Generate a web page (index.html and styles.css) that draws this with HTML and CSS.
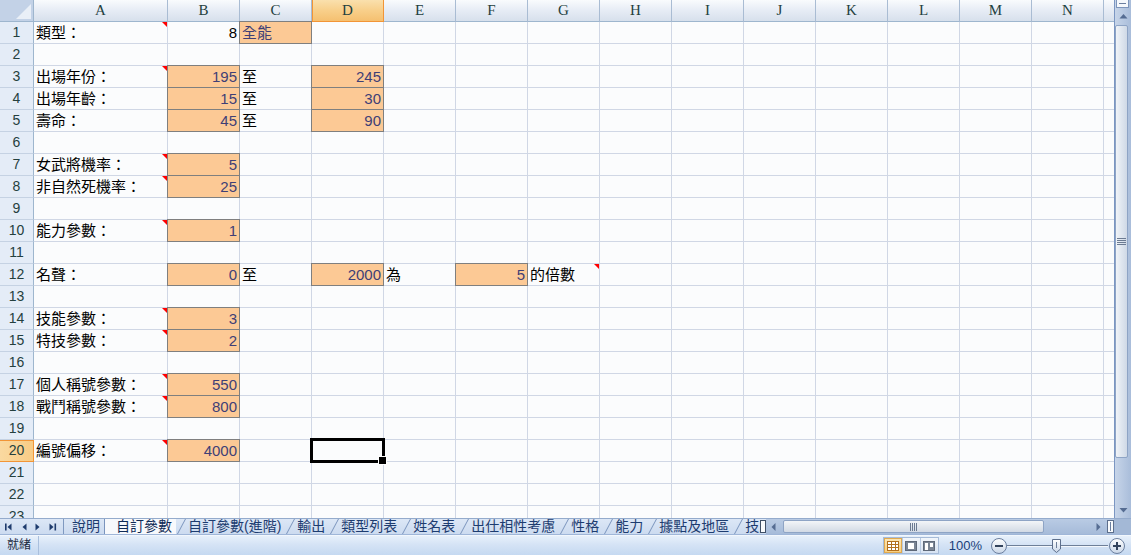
FILE: index.html
```html
<!DOCTYPE html>
<html lang="zh-Hant">
<head>
<meta charset="utf-8">
<title>自訂參數</title>
<link rel="stylesheet" href="styles.css">
</head>
<body>
<div class="app">
  <div class="workspace">
    <div class="sheet" id="sheet"></div>
    <div class="vscroll">
      <div class="vsplit"><span></span></div>
      <div class="vbtn">
        <svg width="13" height="17" viewBox="0 0 13 17"><path d="M2.5 10.5 L6.5 6 L10.5 10.5 Z" fill="#556c92"/></svg>
      </div>
      <div class="vthumb">
        <svg width="9" height="9" viewBox="0 0 9 9"><path d="M0 1.5 H9 M0 3.5 H9 M0 5.5 H9 M0 7.5 H9" stroke="#6c7b92" stroke-width="1"/></svg>
      </div>
      <div class="vtrack"></div>
      <div class="vbtn">
        <svg width="13" height="17" viewBox="0 0 13 17"><path d="M2.5 7 L6.5 11.5 L10.5 7 Z" fill="#556c92"/></svg>
      </div>
    </div>
  </div>

  <div class="bottombar">
    <div class="tabnav">
      <svg width="62" height="16" viewBox="0 0 62 16">
        <g fill="#1e3b6d">
          <rect x="5" y="4.5" width="1.6" height="7"/>
          <path d="M11.5 4.5 L7.5 8 L11.5 11.5 Z"/>
          <path d="M26.5 4.5 L22.5 8 L26.5 11.5 Z"/>
          <path d="M35.5 4.5 L39.5 8 L35.5 11.5 Z"/>
          <path d="M49.5 4.5 L53.5 8 L49.5 11.5 Z"/>
          <rect x="54.5" y="4.5" width="1.6" height="7"/>
        </g>
      </svg>
    </div>
    <div class="tabs">
      <div class="tab first">說明</div>
      <div class="tab current">自訂參數</div>
      <div class="tab">自訂參數(進階)</div>
      <div class="tab">輸出</div>
      <div class="tab">類型列表</div>
      <div class="tab">姓名表</div>
      <div class="tab">出仕相性考慮</div>
      <div class="tab">性格</div>
      <div class="tab">能力</div>
      <div class="tab">據點及地區</div>
      <div class="tab">技能</div>
    </div>
    <div class="tabsplit"></div>
    <div class="hscroll">
      <div class="hbtn">
        <svg width="16" height="16" viewBox="0 0 16 16"><path d="M9.5 4 L5.5 8 L9.5 12 Z" fill="#556c92"/></svg>
      </div>
      <div class="hthumb">
        <svg width="9" height="8" viewBox="0 0 9 8"><path d="M1.5 0 V8 M3.5 0 V8 M5.5 0 V8 M7.5 0 V8" stroke="#6c7b92" stroke-width="1"/></svg>
      </div>
      <div class="htrack"></div>
      <div class="hbtn">
        <svg width="16" height="16" viewBox="0 0 16 16"><path d="M6.5 4 L10.5 8 L6.5 12 Z" fill="#556c92"/></svg>
      </div>
      <div class="hsplit"><span></span></div>
    </div>
    <div class="corner"></div>
  </div>

  <div class="status">
    <div class="status-label">就緒</div>
    <div class="status-right">
      <div class="views">
        <div class="view on">
          <svg width="12" height="10" viewBox="0 0 12 10"><rect x="0.5" y="0.5" width="11" height="9" fill="#fff" stroke="#b26f1d"/><path d="M0.5 3.5 H11.5 M0.5 6.5 H11.5 M4.5 0.5 V9.5 M8.5 0.5 V9.5" stroke="#b26f1d"/></svg>
        </div>
        <div class="view">
          <svg width="12" height="10" viewBox="0 0 12 10"><rect x="0.5" y="0.5" width="11" height="9" fill="#7a8595" stroke="#5e6878"/><rect x="3" y="2" width="6" height="6" fill="#fff"/></svg>
        </div>
        <div class="view">
          <svg width="12" height="10" viewBox="0 0 12 10"><rect x="0.5" y="0.5" width="11" height="9" fill="#7a8595" stroke="#5e6878"/><rect x="2" y="2" width="3" height="7" fill="#fff"/><rect x="7" y="2" width="3" height="4" fill="#fff"/></svg>
        </div>
      </div>
      <div class="zoom-level">100%</div>
      <svg class="zoom" width="134" height="18" viewBox="0 0 134 18">
        <defs>
          <linearGradient id="knob" x1="0" y1="0" x2="0" y2="1">
            <stop offset="0" stop-color="#ffffff"/>
            <stop offset="1" stop-color="#c9d6e8"/>
          </linearGradient>
        </defs>
        <circle cx="8" cy="9" r="7.5" fill="url(#knob)" stroke="#6b7f9f"/>
        <rect x="4" y="8" width="8" height="2" fill="#33435c"/>
        <path d="M16 8.5 H117" stroke="#6e7f99" stroke-width="1"/>
        <path d="M16 9.5 H117" stroke="#f3f7fc" stroke-width="1"/>
        <path d="M61.5 2.5 H69.5 V12 L65.5 15.5 L61.5 12 Z" fill="url(#knob)" stroke="#5d6f8c"/>
        <path d="M65.5 5 V11" stroke="#6e7f99"/>
        <circle cx="126" cy="9" r="7.5" fill="url(#knob)" stroke="#6b7f9f"/>
        <rect x="122" y="8" width="8" height="2" fill="#33435c"/>
        <rect x="125" y="5" width="2" height="8" fill="#33435c"/>
      </svg>
    </div>
  </div>
</div>
<script src="script.js"></script>
</body>
</html>
```

FILE: styles.css
```css
* {
  box-sizing: border-box;
}

html,
body {
  margin: 0;
  height: 100%;
}

body {
  font-family: "Liberation Sans", "Noto Sans CJK TC", sans-serif;
  background: #fbfcfd;
  overflow: hidden;
}

.app {
  width: 1131px;
  height: 555px;
  display: flex;
  flex-direction: column;
}

/* ---------- worksheet ---------- */

.workspace {
  display: flex;
  height: 518px;
}

.sheet {
  flex: 1;
  min-width: 0;
  overflow: hidden;
  display: grid;
  grid-template-columns: 34px 134px repeat(14, 72px);
  grid-auto-rows: 22px;
  align-content: start;
  background: #fbfcfd;
}

.corner-all {
  position: relative;
  background: #c3d2e7;
  border-right: 1px solid #9eb6ce;
  border-bottom: 1px solid #9eb6ce;
}

.corner-all::after {
  content: "";
  position: absolute;
  right: 2px;
  bottom: 2px;
  width: 15px;
  height: 15px;
  background: #e9eff7;
  clip-path: polygon(100% 0, 100% 100%, 0 100%);
}

.colhead {
  border-right: 1px solid #a9bcd3;
  border-bottom: 1px solid #9eb6ce;
  background: linear-gradient(#f9fbfd, #e6ecf5 50%, #d7e0ec);
  font: 15px/21px "Liberation Serif", serif;
  text-align: center;
  color: #24403e;
}

.colhead.is-active {
  background: linear-gradient(#fae0ad, #f8cf8a 50%, #f5c070);
  border-right-color: #f29536;
  border-bottom-color: #f29536;
  box-shadow: inset 1px 0 #f29536;
}

.rowhead {
  border-right: 1px solid #9eb6ce;
  border-bottom: 1px solid #c5d2e3;
  background: #e4ecf7;
  font-size: 14px;
  line-height: 21px;
  text-align: center;
  color: #24403e;
}

.rowhead.is-active {
  background: linear-gradient(90deg, #fad9a0, #f8cc86);
  border-right-color: #f29536;
  border-bottom-color: #f29536;
  box-shadow: inset 0 1px #f29536;
}

.cell {
  position: relative;
  border-right: 1px solid #d0d7e5;
  border-bottom: 1px solid #d0d7e5;
  padding: 0 2px;
  font-size: 15px;
  line-height: 22px;
  white-space: nowrap;
  color: #000;
}

.cell.num {
  text-align: right;
}

/* Excel "Input" cell style */
.cell.input {
  background: #fcc995;
  color: #3f3f76;
}

.cell.input::before {
  content: "";
  position: absolute;
  inset: -1px;
  border: 1px solid #7f7f7f;
  pointer-events: none;
}

/* comment indicator */
.cell.note::after {
  content: "";
  position: absolute;
  top: 0;
  right: 0;
  border-top: 5px solid #ff0000;
  border-left: 5px solid transparent;
}

/* active cell frame and fill handle */
.cell.active::before {
  content: "";
  position: absolute;
  inset: -2px;
  border: 3px solid #000;
  z-index: 2;
}

.cell.active::after {
  content: "";
  position: absolute;
  right: -4px;
  bottom: -4px;
  width: 7px;
  height: 7px;
  background: #000;
  border: 1px solid #fff;
  z-index: 3;
}

/* ---------- vertical scrollbar ---------- */

.vscroll {
  width: 17px;
  display: flex;
  flex-direction: column;
  border-left: 1px solid #7b96c2;
  background: linear-gradient(90deg, #c7d5e9, #a9bdda);
}

.vsplit {
  height: 8px;
  margin: 0 2px 0 1px;
  background: #f5f8fc;
  border: 1px solid #7d95bb;
  border-top: 0;
  display: flex;
  align-items: center;
  justify-content: center;
}

.vsplit span {
  width: 7px;
  height: 1px;
  background: #6b7f9f;
}

.vbtn {
  height: 17px;
  display: flex;
  justify-content: center;
}

.vthumb {
  height: 433px;
  margin: 0 3px 0 0;
  border: 1px solid #8ea4c5;
  border-radius: 2px;
  background: linear-gradient(90deg, #f1f4f8, #dfe6ef 50%, #cfd9e6);
  display: flex;
  align-items: center;
  justify-content: center;
}

.vtrack {
  flex: 1;
}

/* ---------- sheet tabs + horizontal scrollbar ---------- */

.bottombar {
  height: 17px;
  display: flex;
  border-top: 1px solid #94abcc;
  background: linear-gradient(#dce7f6, #ccdbf0);
  border-bottom: 1px solid #9fb6d8;
}

.tabnav {
  width: 64px;
  flex: none;
  border-right: 1px solid #7f99c0;
}

.tabnav svg {
  display: block;
}

.tabs {
  width: 696px;
  flex: none;
  display: flex;
  overflow: hidden;
}

.tab {
  position: relative;
  flex: none;
  padding: 0 4px 0 12px;
  font-size: 14px;
  line-height: 15px;
  color: #1d3c70;
  white-space: nowrap;
}

.tab::before {
  content: "";
  position: absolute;
  left: 1px;
  top: 0;
  bottom: 0;
  width: 10px;
  border-left: 1px solid #7a94bd;
  transform: skewX(-28deg);
  transform-origin: left bottom;
}

.tab.first {
  padding-left: 8px;
}

.tab.first::before {
  display: none;
}

.tab.current {
  background: #f7f9fc;
  color: #102b57;
  border-left: 1px solid #7a94bd;
  padding-left: 11px;
}

.tab.current::before {
  display: none;
}

.tabsplit {
  width: 6px;
  flex: none;
  background: #f8fafc;
  border: 1px solid #3f4f66;
  margin: 1px 0;
}

.hscroll {
  width: 348px;
  flex: none;
  display: flex;
  background: linear-gradient(#b9cbe4, #a6bbd9);
}

.hbtn {
  width: 17px;
  flex: none;
}

.hbtn svg {
  display: block;
}

.hthumb {
  width: 261px;
  flex: none;
  margin: 1px 0 1px 0;
  border: 1px solid #8ea4c5;
  border-radius: 2px;
  background: linear-gradient(#f3f5f8, #e2e7ee 50%, #d2dae5);
  display: flex;
  align-items: center;
  justify-content: center;
}

.htrack {
  flex: 1;
}

.hsplit {
  width: 7px;
  flex: none;
  margin: 1px 0;
  background: #f8fafc;
  border: 1px solid #5c6e8c;
  display: flex;
  align-items: center;
  justify-content: center;
}

.hsplit span {
  width: 1px;
  height: 9px;
  background: #6b7f9f;
}

.corner {
  flex: 1;
  background: #a3b8d6;
}

/* ---------- status bar ---------- */

.status {
  flex: 1;
  display: flex;
  align-items: center;
  background: linear-gradient(#e7f0fb, #d5e3f5 45%, #c5d9f1);
  border-top: 1px solid #f2f7fd;
}

.status-label {
  width: 39px;
  height: 100%;
  padding-left: 7px;
  font-size: 12px;
  line-height: 19px;
  color: #1b2a3f;
  border-right: 1px solid #a9bfdd;
}

.status-right {
  margin-left: auto;
  margin-right: 6px;
  display: flex;
  align-items: center;
}

.views {
  display: flex;
  height: 17px;
  border: 1px solid #a6bbd8;
  background: linear-gradient(#f2f6fb, #d6e2f2);
}

.view {
  width: 18px;
  display: flex;
  align-items: center;
  justify-content: center;
}

.view + .view {
  border-left: 1px solid #b8cae2;
}

.view.on {
  background: linear-gradient(#fde7b5, #f8cd7c);
  box-shadow: inset 0 0 0 1px #e0a94f;
}

.zoom-level {
  margin: 0 9px 0 10px;
  font-size: 13px;
  color: #1b3f7a;
}

.zoom {
  display: block;
}
```

FILE: script.js
```javascript
// Builds the worksheet: column headers, row headers and the cell contents.
const COLS = ['A', 'B', 'C', 'D', 'E', 'F', 'G', 'H', 'I', 'J', 'K', 'L', 'M', 'N', 'O'];
const ROW_COUNT = 23;
const ACTIVE = { col: 'D', row: 20 };

// v = value, num = right aligned number, input = "Input" style, note = has a comment
const CELLS = {
  A1: { v: '類型：', note: true },
  B1: { v: '8', num: true },
  C1: { v: '全能', input: true },

  A3: { v: '出場年份：', note: true },
  B3: { v: '195', num: true, input: true },
  C3: { v: '至' },
  D3: { v: '245', num: true, input: true },

  A4: { v: '出場年齡：' },
  B4: { v: '15', num: true, input: true },
  C4: { v: '至' },
  D4: { v: '30', num: true, input: true },

  A5: { v: '壽命：' },
  B5: { v: '45', num: true, input: true },
  C5: { v: '至' },
  D5: { v: '90', num: true, input: true },

  A7: { v: '女武將機率：', note: true },
  B7: { v: '5', num: true, input: true },

  A8: { v: '非自然死機率：', note: true },
  B8: { v: '25', num: true, input: true },

  A10: { v: '能力參數：', note: true },
  B10: { v: '1', num: true, input: true },

  A12: { v: '名聲：' },
  B12: { v: '0', num: true, input: true },
  C12: { v: '至' },
  D12: { v: '2000', num: true, input: true },
  E12: { v: '為' },
  F12: { v: '5', num: true, input: true },
  G12: { v: '的倍數', note: true },

  A14: { v: '技能參數：', note: true },
  B14: { v: '3', num: true, input: true },

  A15: { v: '特技參數：', note: true },
  B15: { v: '2', num: true, input: true },

  A17: { v: '個人稱號參數：', note: true },
  B17: { v: '550', num: true, input: true },

  A18: { v: '戰鬥稱號參數：', note: true },
  B18: { v: '800', num: true, input: true },

  A20: { v: '編號偏移：', note: true },
  B20: { v: '4000', num: true, input: true }
};

function box(className, text) {
  const d = document.createElement('div');
  d.className = className;
  if (text) d.textContent = text;
  return d;
}

const sheet = document.getElementById('sheet');
const frag = document.createDocumentFragment();

frag.appendChild(box('corner-all'));
COLS.forEach(function (c) {
  frag.appendChild(box('colhead' + (c === ACTIVE.col ? ' is-active' : ''), c));
});

for (let r = 1; r <= ROW_COUNT; r++) {
  frag.appendChild(box('rowhead' + (r === ACTIVE.row ? ' is-active' : ''), String(r)));
  COLS.forEach(function (c) {
    const data = CELLS[c + r] || {};
    let cls = 'cell';
    if (data.num) cls += ' num';
    if (data.input) cls += ' input';
    if (data.note) cls += ' note';
    if (c === ACTIVE.col && r === ACTIVE.row) cls += ' active';
    frag.appendChild(box(cls, data.v));
  });
}

sheet.appendChild(frag);
```
